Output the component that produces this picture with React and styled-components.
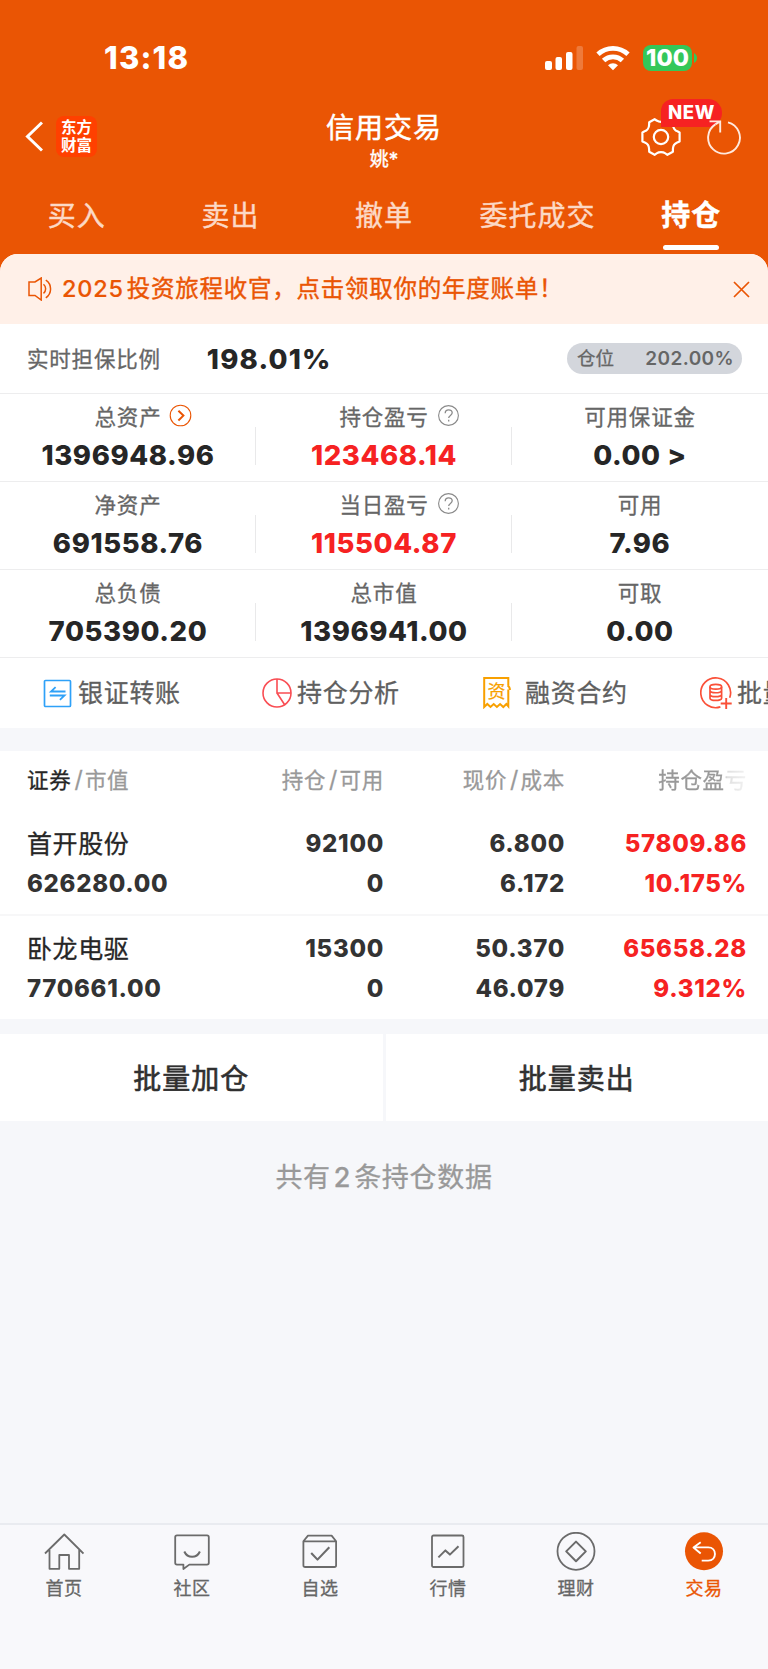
import styled, { createGlobalStyle, css } from 'styled-components';

const GlobalStyle = createGlobalStyle`
  * {
    box-sizing: border-box;
  }

  body {
    margin: 0;
    background: #f6f7fa;
    font-family: Inter, 'Noto Sans CJK SC', sans-serif;
    color: #262626;
  }

  svg {
    display: block;
    flex: none;
  }
`;

const Page = styled.div`
  width: 768px;
  height: 1669px;
  display: flex;
  flex-direction: column;
  overflow: hidden;
  background: #f6f7fa;
`;

// Header
const Header = styled.header`
  height: 272px;
  flex: none;
  background: #ea5504;
  color: #fff;
`;

const StatusBar = styled.div`
  height: 103px;
  padding: 12px 70px 0 104px;
  display: flex;
  align-items: center;
  justify-content: space-between;
`;

const Time = styled.div`
  font-size: 31px;
  font-weight: 800;
  line-height: 36px;
  letter-spacing: 1.2px;
`;

const StatusIcons = styled.div`
  display: flex;
  align-items: center;
`;

const Battery = styled.div`
  width: 49px;
  height: 26px;
  margin-left: 13px;
  border-radius: 8px;
  background: #34c759;
  font-size: 23.5px;
  font-weight: 800;
  line-height: 26px;
  text-align: center;
`;

const NavBar = styled.div`
  height: 79px;
  padding: 0 26px 0 25px;
  display: grid;
  grid-template-columns: 1fr auto 1fr;
  align-items: center;
`;

const NavLeft = styled.div`
  display: flex;
  align-items: center;
  gap: 13px;
  padding-bottom: 12px;
`;

const Logo = styled.div`
  width: 41px;
  height: 41px;
  padding-top: 3px;
  border-radius: 8px;
  background: #ff4000;
  font-size: 15.5px;
  font-weight: 700;
  line-height: 17.5px;
  text-align: center;
`;

const NavTitle = styled.div`
  display: flex;
  flex-direction: column;
  align-items: center;
  padding-left: 1px;
`;

const Title = styled.div`
  font-size: 28px;
  line-height: 35px;
  letter-spacing: 1px;
  -webkit-text-stroke: 0.5px currentColor;
`;

const SubTitle = styled.div`
  font-size: 19px;
  line-height: 28px;
  -webkit-text-stroke: 0.4px currentColor;
`;

const NavRight = styled.div`
  position: relative;
  display: flex;
  justify-content: flex-end;
  align-items: center;
  gap: 26px;
  padding-bottom: 11px;
`;

const NewBadge = styled.span`
  position: absolute;
  right: 20px;
  top: -18px;
  width: 61px;
  height: 28px;
  border-radius: 13px 15px 15px 0;
  background: #f62222;
  font-size: 18.5px;
  font-weight: 800;
  line-height: 27px;
  letter-spacing: 0.6px;
  text-align: center;
`;

const Tabs = styled.nav`
  height: 72px;
  display: flex;
`;

const Tab = styled.div`
  flex: 1;
  display: flex;
  flex-direction: column;
  align-items: center;
  padding-top: 14px;
  font-size: 28px;
  line-height: 40px;
  letter-spacing: 1px;
  color: #fcd9c6;
  -webkit-text-stroke: 0.4px currentColor;

  ${({ $active }) =>
    $active &&
    css`
      color: #fff;
      font-size: 29px;
      font-weight: 700;

      &::after {
        content: '';
        width: 56px;
        height: 5px;
        margin-top: 9px;
        border-radius: 3px;
        background: #fff;
      }
    `}
`;

// Panel
const Panel = styled.main`
  flex: none;
  margin-top: -18px;
  border-radius: 18px 18px 0 0;
  overflow: hidden;
  background: #fff;
`;

const Notice = styled.div`
  height: 70px;
  padding: 0 18px 0 28px;
  display: flex;
  align-items: center;
  background: #fff0e8;
  color: #ea5504;
`;

const NoticeText = styled.div`
  flex: 1;
  margin-left: 10px;
  font-size: 23.5px;
  line-height: 34px;
  letter-spacing: 0.75px;
  -webkit-text-stroke: 0.4px currentColor;

  b {
    margin-right: 3px;
    font-weight: 500;
    -webkit-text-stroke: 0.15px currentColor;
  }
`;

const RatioRow = styled.div`
  height: 70px;
  padding: 0 26px 0 27px;
  display: flex;
  align-items: center;
  border-bottom: 1px solid #ededee;
`;

const Label = styled.span`
  font-size: 21.5px;
  line-height: 32px;
  letter-spacing: 0.8px;
  color: #666;
  -webkit-text-stroke: 0.3px currentColor;
`;

const Value = styled.span`
  font-size: 27.5px;
  font-weight: 800;
  line-height: 34px;
  letter-spacing: 0.6px;
  color: ${({ $up }) => ($up ? '#f62222' : '#262626')};
`;

const RatioValue = styled(Value)`
  margin-left: 46px;
  flex: 1;
  letter-spacing: 1.2px;
`;

const Pill = styled.div`
  width: 175px;
  height: 31px;
  padding: 0 8px 0 10px;
  display: flex;
  align-items: center;
  justify-content: space-between;
  border-radius: 16px;
  background: #d3d6dc;
  color: #666;
  font-size: 18.5px;
  line-height: 31px;
  -webkit-text-stroke: 0.3px currentColor;

  b {
    font-weight: 600;
    font-size: 19px;
    letter-spacing: 0.4px;
    -webkit-text-stroke: 0;
  }
`;

const Stats = styled.div`
  display: grid;
  grid-template-columns: repeat(3, 256px);
`;

const Stat = styled.div`
  position: relative;
  height: 88px;
  padding-top: 7px;
  display: flex;
  flex-direction: column;
  align-items: center;
  border-bottom: 1px solid #ededee;

  &:not(:nth-child(3n))::after {
    content: '';
    position: absolute;
    right: 0;
    top: 33px;
    width: 1px;
    height: 38px;
    background: #e9e9ea;
  }

  ${Value} {
    margin-top: 5px;
  }
`;

const StatLabel = styled.div`
  width: 100%;
  display: grid;
  grid-template-columns: 1fr auto 1fr;
  align-items: center;

  ${Label} {
    grid-column: 2;
  }

  svg {
    margin: -3px 0 0 8px;
  }
`;

const Actions = styled.div`
  height: 70px;
  padding-left: 43px;
  display: flex;
  align-items: center;
  overflow: hidden;
`;

const Action = styled.div`
  flex: none;
  width: ${({ $width }) => $width}px;
  display: flex;
  align-items: center;
  gap: ${({ $gap }) => $gap}px;
  font-size: 25px;
  line-height: 36px;
  letter-spacing: 0.7px;
  white-space: nowrap;
  color: #5f5f5f;
  -webkit-text-stroke: 0.3px currentColor;

  svg {
    -webkit-text-stroke: 0;
  }
`;

// Holdings
const Holdings = styled.section`
  flex: none;
  margin-top: 23px;
  height: 268px;
  background: #fff;
`;

const columns = css`
  display: grid;
  grid-template-columns: 177px 180px 181px 182px;
  padding-left: 27px;
`;

const HeadRow = styled.div`
  ${columns}
  height: 59px;
  line-height: 58px;
  font-size: 21.5px;
  letter-spacing: 0.7px;
  color: #999;
  -webkit-text-stroke: 0.3px currentColor;

  div + div {
    text-align: right;
  }

  strong {
    font-weight: 400;
    color: #262626;
  }

  i {
    margin: 0 1.5px 0 3px;
    font-size: 23px;
    font-style: normal;
  }
`;

const FadeCell = styled.div`
  mask-image: linear-gradient(90deg, #000 87%, rgba(0, 0, 0, 0.3) 89%, rgba(0, 0, 0, 0.12) 100%);
`;

const Holding = styled.div`
  ${columns}
  height: ${({ $last }) => ($last ? '103px' : '106px')};
  padding-top: ${({ $last }) => ($last ? '13px' : '14px')};
  border-bottom: ${({ $last }) => ($last ? 'none' : '2px solid #f7f7f8')};
`;

const Cell = styled.div`
  display: flex;
  flex-direction: column;
  align-items: ${({ $left }) => ($left ? 'flex-start' : 'flex-end')};
  font-size: 24px;
  font-weight: 800;
  line-height: 40px;
  letter-spacing: 0.7px;
  color: ${({ $up }) => ($up ? '#f62222' : '#333')};
`;

const StockName = styled.span`
  font-size: 25px;
  font-weight: 400;
  letter-spacing: 0.6px;
  color: #262626;
  -webkit-text-stroke: 0.3px currentColor;
`;

const Batch = styled.div`
  flex: none;
  height: 87px;
  margin-top: 15px;
  display: grid;
  grid-template-columns: 1fr 1fr;
  gap: 3px;
`;

const BatchButton = styled.div`
  padding-top: 3px;
  background: #fff;
  font-size: 28px;
  line-height: 84px;
  letter-spacing: 1px;
  text-align: center;
  color: #303030;
  -webkit-text-stroke: 0.6px currentColor;
`;

const Summary = styled.div`
  flex: 1;
  padding-top: 37px;
  font-size: 27px;
  line-height: 40px;
  letter-spacing: 0.7px;
  text-align: center;
  color: #999;
  -webkit-text-stroke: 0.3px currentColor;

  span {
    margin: 0 3px;
    font-weight: 500;
  }
`;

// Bottom bar
const BottomBar = styled.nav`
  flex: none;
  height: 146px;
  display: flex;
  border-top: 2px solid #e9ebf0;
  background: #f8f8fb;
`;

const BottomItem = styled.div`
  flex: 1;
  padding-top: 7px;
  display: flex;
  flex-direction: column;
  align-items: center;
  font-size: 18px;
  line-height: 28px;
  letter-spacing: 0.6px;
  color: ${({ $active }) => ($active ? '#ea5504' : '#666')};
  -webkit-text-stroke: 0.3px currentColor;

  svg {
    margin-bottom: 3px;
  }
`;

const stats = [
  { label: '总资产', value: '1396948.96', icon: 'more' },
  { label: '持仓盈亏', value: '123468.14', icon: 'help', up: true },
  { label: '可用保证金', value: '0.00 >' },
  { label: '净资产', value: '691558.76' },
  { label: '当日盈亏', value: '115504.87', icon: 'help', up: true },
  { label: '可用', value: '7.96' },
  { label: '总负债', value: '705390.20' },
  { label: '总市值', value: '1396941.00' },
  { label: '可取', value: '0.00' },
];

const holdings = [
  { name: '首开股份', market: '626280.00', amount: '92100', usable: '0', price: '6.800', cost: '6.172', profit: '57809.86', rate: '10.175%' },
  { name: '卧龙电驱', market: '770661.00', amount: '15300', usable: '0', price: '50.370', cost: '46.079', profit: '65658.28', rate: '9.312%' },
];

const Signal = () => (
  <svg width="38" height="26" viewBox="0 0 38 26" fill="#fff">
    <rect x="0" y="16" width="7" height="9" rx="2" />
    <rect x="10.5" y="12" width="6.5" height="13" rx="2" />
    <rect x="21" y="7" width="6.5" height="18" rx="2" />
    <rect x="31.5" y="1" width="6.5" height="24" rx="2" opacity="0.22" />
  </svg>
);

const WifiIcon = styled.svg`
  margin-left: 13px;
`;

const Wifi = () => (
  <WifiIcon width="34" height="26" viewBox="0 0 34 26" fill="none" stroke="#fff" strokeWidth="4.8">
    <path d="M2 9.2a22 22 0 0 1 30 0" />
    <path d="M7.6 15.6a13.6 13.6 0 0 1 18.8 0" />
    <path d="M17 25.2l-5-5a7.3 7.3 0 0 1 10 0z" fill="#fff" stroke="none" />
  </WifiIcon>
);

const TipIcon = styled.svg`
  margin-left: 2px;
`;

const BatteryTip = () => (
  <TipIcon width="4" height="10" viewBox="0 0 4 10">
    <path d="M0 0c2 1 3 3 3 5s-1 4-3 5z" fill="#34c759" />
  </TipIcon>
);

const Back = () => (
  <svg width="18" height="31" viewBox="0 0 18 31" fill="none" stroke="#fff" strokeWidth="3">
    <path d="M17 1.5L2.5 15.5 17 29.5" />
  </svg>
);

const Gear = () => (
  <svg width="40" height="40" viewBox="0 0 40 40" fill="none" stroke="#fff" strokeWidth="2.2" strokeLinejoin="round">
    <circle cx="20" cy="20" r="7.2" />
    <path d="M13.6 2.2 16 3.7C18 5.3 22 5.3 24 3.7L26.4 2.2 31.8 5.2 31.9 8C32 11 34.3 13.7 36.4 14.3L38.6 15.4V24.6L36.2 25.6C34 26.5 32 29 31.9 32V34.8L26.4 37.8 24 36.2C22 34.8 18 34.8 16 36.2L13.6 37.8 8.2 34.8 8.1 32C8 29 6 26.5 3.8 25.6L1.4 24.6V15.4L3.6 14.3C5.8 13.7 8 11 8.1 8L8.2 5.2Z" />
  </svg>
);

// sits above the NEW badge
const RefreshIcon = styled.svg`
  position: relative;
  z-index: 1;
`;

const Refresh = () => (
  <RefreshIcon width="35" height="36" viewBox="0 0 35 36" fill="none" stroke="#ffe9de" strokeWidth="1.9">
    <path d="M21 3.3A15.9 15.9 0 1 1 8.3 5.4" />
    <path d="M2.5 2.4h10.7v11M13.2 2.4L8.3 5.4" />
  </RefreshIcon>
);

const Speaker = () => (
  <svg width="24" height="24" viewBox="0 0 24 24" fill="none" stroke="#ea5504" strokeWidth="1.5">
    <path d="M1 5h6l6.2-4v22L7 18.5H1z" />
    <path d="M15.5 7.2a6 6 0 0 1 0 9.2" />
    <path d="M17.8 3.2a10.5 10.5 0 0 1 0 17.6" />
  </svg>
);

const Close = () => (
  <svg width="17" height="17" viewBox="0 0 17 17" stroke="#ea5504" strokeWidth="1.7">
    <path d="M1 1l15 15M16 1L1 16" />
  </svg>
);

const More = () => (
  <svg width="23" height="23" viewBox="0 0 23 23" fill="none" stroke="#ea5504">
    <circle cx="11.5" cy="11.5" r="10.3" strokeWidth="1.1" />
    <path d="M9.4 6.7l5 4.9-5 4.9" strokeWidth="2" />
  </svg>
);

const Help = () => (
  <svg width="23" height="23" viewBox="0 0 23 23" fill="none" stroke="#8a8a8a" strokeWidth="1.1">
    <circle cx="11.5" cy="11.5" r="9.9" />
    <path d="M8.2 9.2c0-4.6 7-4.3 7-.4 0 2.5-3.5 2.7-3.5 5.2M11.7 15.8v1.7" strokeWidth="1.3" />
  </svg>
);

const Transfer = () => (
  <svg width="29" height="29" viewBox="0 0 29 29" fill="none" stroke="#2ea1f8">
    <rect x="1.5" y="1.5" width="26" height="26" rx="1" strokeWidth="1.7" />
    <path d="M22.5 12.5H8l4.6-4.3M6.8 16.5h14.7l-4.6 4.3" strokeWidth="1.8" />
  </svg>
);

const Pie = () => (
  <svg width="30" height="30" viewBox="0 0 30 30" fill="none" stroke="#f94d53" strokeWidth="1.6">
    <circle cx="15" cy="15" r="14" />
    <path d="M15 1v14h14M15 15l7.5 11.5" />
  </svg>
);

const Contract = () => (
  <svg width="28" height="32" viewBox="0 0 28 32" fill="none" stroke="#f8a000" strokeWidth="2">
    <path d="M25.3 8.3V1H1.2V30l3.1-3 3.2 3 3.2-3 3.2 3 3.2-3 3.2 3 3.1-3 1.9 2.2V12.5" />
    <path d="M24.5 8.3c2 1 2.4 1.8 2.4 4.7" />
    <text x="13.5" y="20.8" textAnchor="middle" fontSize="18" letterSpacing="0" fill="#f8a000" stroke="#f8a000" strokeWidth="0.2">
      资
    </text>
  </svg>
);

const Fund = () => (
  <svg width="33" height="33" viewBox="0 0 33 33" fill="none" stroke="#fa5038" strokeWidth="1.7">
    <path d="M20.4 29.9A14.9 14.9 0 1 1 29.7 20.8" />
    <ellipse cx="15.8" cy="9.7" rx="5.8" ry="2.4" />
    <path d="M10 9.7v11.5c0 3 11.6 3 11.6 0V9.7M10 13.5c0 3 11.6 3 11.6 0M10 17.4c0 3 11.6 3 11.6 0" />
    <path d="M26.2 21v11M20.7 26.5h11" strokeWidth="1.9" />
  </svg>
);

const BottomIcon = ({ children }) => (
  <svg width="40" height="40" viewBox="0 0 40 40" fill="none" stroke="#6b6b6b" strokeWidth="1.8" strokeLinejoin="round">
    {children}
  </svg>
);

const tabs = ['买入', '卖出', '撤单', '委托成交', '持仓'];

const bottomItems = [
  { label: '首页', icon: <path d="M1 21.5L20.3 2.5 39.5 21.5M5.5 18v18.8h9.8V23h9.7v13.8h10.2V18" /> },
  {
    label: '社区',
    icon: (
      <>
        <path d="M5 3.4h30q1.8 0 1.8 1.8v25.6q0 1.8-1.8 1.8H17.3L11.4 37v-4.4H5q-1.8 0-1.8-1.8V5.2Q3.2 3.4 5 3.4z" />
        <path d="M12.3 19.5c3.2 7 12.4 7 15.6 0" strokeWidth="2" />
      </>
    ),
  },
  {
    label: '自选',
    icon: (
      <>
        <path d="M3.4 9.2L8 3.6h23.6l4.5 5.6v24q0 1.8-1.8 1.8H5.2q-1.8 0-1.8-1.8zM3.4 9.4h32.7" />
        <path d="M11.2 21l6.3 6.6 11.8-12.4" strokeWidth="2.1" />
      </>
    ),
  },
  {
    label: '行情',
    icon: (
      <>
        <rect x="4" y="3.5" width="31.5" height="31.5" rx="1.5" />
        <path d="M10.4 25.4l7-7 4.5 4.2 8.6-8.4" strokeWidth="2" />
      </>
    ),
  },
  {
    label: '理财',
    icon: (
      <>
        <circle cx="20" cy="19.3" r="18.5" />
        <path d="M20 9.6l9.8 9.8-9.8 9.8-9.8-9.8z" strokeWidth="2" />
      </>
    ),
  },
  {
    label: '交易',
    active: true,
    icon: (
      <>
        <circle cx="20" cy="19.3" r="19" fill="#ea5504" stroke="none" />
        <path d="M16.7 10.2l-7.2 5.2 7.2 6M9.8 15.4h14.4c9 0 9 13.2 0 13.2h-6.5" stroke="#fff" strokeWidth="1.9" />
      </>
    ),
  },
];

const App = () => {
  return (
    <>
      <GlobalStyle />
      <Page>
        <Header>
          <StatusBar>
            <Time>13:18</Time>
            <StatusIcons>
              <Signal />
              <Wifi />
              <Battery>100</Battery>
              <BatteryTip />
            </StatusIcons>
          </StatusBar>
          <NavBar>
            <NavLeft>
              <Back />
              <Logo>
                东方
                <br />
                财富
              </Logo>
            </NavLeft>
            <NavTitle>
              <Title>信用交易</Title>
              <SubTitle>姚*</SubTitle>
            </NavTitle>
            <NavRight>
              <Gear />
              <NewBadge>NEW</NewBadge>
              <Refresh />
            </NavRight>
          </NavBar>
          <Tabs>
            {tabs.map((tab) => (
              <Tab key={tab} $active={tab === '持仓'}>
                {tab}
              </Tab>
            ))}
          </Tabs>
        </Header>

        <Panel>
          <Notice>
            <Speaker />
            <NoticeText>
              <b>2025</b>投资旅程收官，点击领取你的年度账单！
            </NoticeText>
            <Close />
          </Notice>
          <RatioRow>
            <Label>实时担保比例</Label>
            <RatioValue>198.01%</RatioValue>
            <Pill>
              仓位 <b>202.00%</b>
            </Pill>
          </RatioRow>
          <Stats>
            {stats.map(({ label, value, icon, up }) => (
              <Stat key={label}>
                <StatLabel>
                  <Label>{label}</Label>
                  {icon === 'more' && <More />}
                  {icon === 'help' && <Help />}
                </StatLabel>
                <Value $up={up}>{value}</Value>
              </Stat>
            ))}
          </Stats>
          <Actions>
            <Action $width={219} $gap={6}>
              <Transfer />
              银证转账
            </Action>
            <Action $width={221} $gap={5}>
              <Pie />
              持仓分析
            </Action>
            <Action $width={217} $gap={14}>
              <Contract />
              融资合约
            </Action>
            <Action $width={220} $gap={4}>
              <Fund />
              批量
            </Action>
          </Actions>
        </Panel>

        <Holdings>
          <HeadRow>
            <div>
              <strong>证券</strong>
              <i>/</i>市值
            </div>
            <div>
              持仓<i>/</i>可用
            </div>
            <div>
              现价<i>/</i>成本
            </div>
            <FadeCell>持仓盈亏</FadeCell>
          </HeadRow>
          {holdings.map((item, index) => (
            <Holding key={item.name} $last={index === holdings.length - 1}>
              <Cell $left>
                <StockName>{item.name}</StockName>
                <span>{item.market}</span>
              </Cell>
              <Cell>
                <span>{item.amount}</span>
                <span>{item.usable}</span>
              </Cell>
              <Cell>
                <span>{item.price}</span>
                <span>{item.cost}</span>
              </Cell>
              <Cell $up>
                <span>{item.profit}</span>
                <span>{item.rate}</span>
              </Cell>
            </Holding>
          ))}
        </Holdings>

        <Batch>
          <BatchButton>批量加仓</BatchButton>
          <BatchButton>批量卖出</BatchButton>
        </Batch>
        <Summary>
          共有<span>2</span>条持仓数据
        </Summary>

        <BottomBar>
          {bottomItems.map(({ label, icon, active }) => (
            <BottomItem key={label} $active={active}>
              <BottomIcon>{icon}</BottomIcon>
              {label}
            </BottomItem>
          ))}
        </BottomBar>
      </Page>
    </>
  );
};

export default App;
